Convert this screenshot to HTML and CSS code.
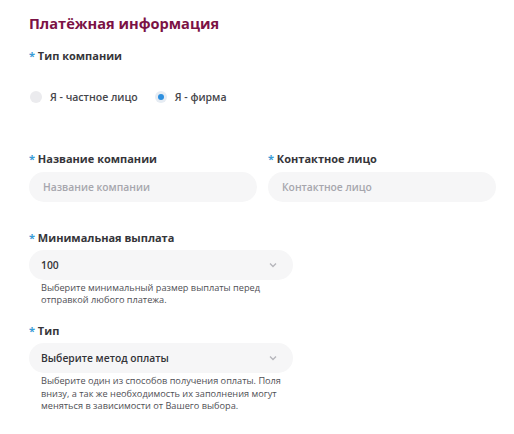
FILE: index.html
```html
<!DOCTYPE html>
<html lang="ru">
<head>
<meta charset="utf-8">
<link rel="stylesheet" href="styles.css">
</head>
<body>
<div class="page">
  <h1 class="title">Платёжная информация</h1>

  <div class="field first">
    <div class="label"><span class="req">*</span> Тип компании</div>
    <div class="radios">
      <label class="radio"><span class="dot"></span>Я - частное лицо</label>
      <label class="radio"><span class="dot checked"></span>Я - фирма</label>
    </div>
  </div>

  <div class="row">
    <div class="col">
      <div class="label"><span class="req">*</span> Название компании</div>
      <div class="input placeholder">Название компании</div>
    </div>
    <div class="col">
      <div class="label"><span class="req">*</span> Контактное лицо</div>
      <div class="input placeholder">Контактное лицо</div>
    </div>
  </div>

  <div class="field sel-field">
    <div class="label"><span class="req">*</span> Минимальная выплата</div>
    <div class="select"><span class="val">100</span>
      <svg class="chev" width="8" height="6" viewBox="0 0 8 6"><path d="M1 1.5 L4 4.5 L7 1.5" fill="none" stroke="#b5b5bb" stroke-width="1.3"/></svg>
    </div>
    <p class="help">Выберите минимальный размер выплаты перед<br>отправкой любого платежа.</p>
  </div>

  <div class="field sel-field2">
    <div class="label"><span class="req">*</span> Тип</div>
    <div class="select"><span class="val">Выберите метод оплаты</span>
      <svg class="chev" width="8" height="6" viewBox="0 0 8 6"><path d="M1 1.5 L4 4.5 L7 1.5" fill="none" stroke="#b5b5bb" stroke-width="1.3"/></svg>
    </div>
    <p class="help">Выберите один из способов получения оплаты. Поля<br>внизу, а так же необходимость их заполнения могут<br>меняться в зависимости от Вашего выбора.</p>
  </div>
</div>
</body>
</html>
```

FILE: styles.css
```css
html, body {
  margin: 0;
  padding: 0;
  background: #ffffff;
}
body {
  font-family: "Open Sans", "Noto Sans", sans-serif;
  color: #333338;
}
.page {
  padding: 12px 18px 0 29px;
}
.title {
  margin: 0;
  font-size: 14.6px;
  line-height: 22px;
  font-weight: 700;
  color: #7b1245;
}
.label {
  font-size: 11px;
  line-height: 15px;
  font-weight: 700;
  color: #35353a;
}
.req {
  color: #3a9bd6;
}
.field.first {
  margin-top: 14px;
}
.radios {
  display: flex;
  gap: 16px;
  margin-top: 27px;
  align-items: center;
}
.radio {
  display: flex;
  align-items: center;
  font-size: 10.5px;
  font-weight: 600;
  color: #45454a;
}
.dot {
  width: 12px;
  height: 12px;
  border-radius: 50%;
  background: #ebebee;
  margin: 0 8px 0 1px;
  position: relative;
}
.dot.checked {
  background: #e6ecf3;
}
.dot.checked::after {
  content: "";
  position: absolute;
  left: 3px;
  top: 3px;
  width: 6px;
  height: 6px;
  border-radius: 50%;
  background: #2d8fdf;
}
.row {
  display: flex;
  gap: 11px;
  margin-top: 47px;
}
.col {
  width: 228px;
}
.input, .select {
  height: 30px;
  border-radius: 15px;
  background: #f6f6f7;
  display: flex;
  align-items: center;
  padding: 0 14px;
  font-size: 10.3px;
  font-weight: 600;
  margin-top: 6px;
}
.placeholder {
  color: #a6a6ad;
}
.sel-field {
  margin-top: 28px;
}
.sel-field2 {
  margin-top: 17px;
}
.select {
  width: 264px;
  box-sizing: border-box;
  padding: 0 14px 0 12px;
  justify-content: space-between;
  color: #333338;
  margin-top: 5px;
}
.chev {
  display: block;
  margin-right: 2px;
}
.help {
  margin: 2px 0 0 12px;
  font-size: 9.2px;
  line-height: 12.2px;
  color: #4f4f55;
}
```
